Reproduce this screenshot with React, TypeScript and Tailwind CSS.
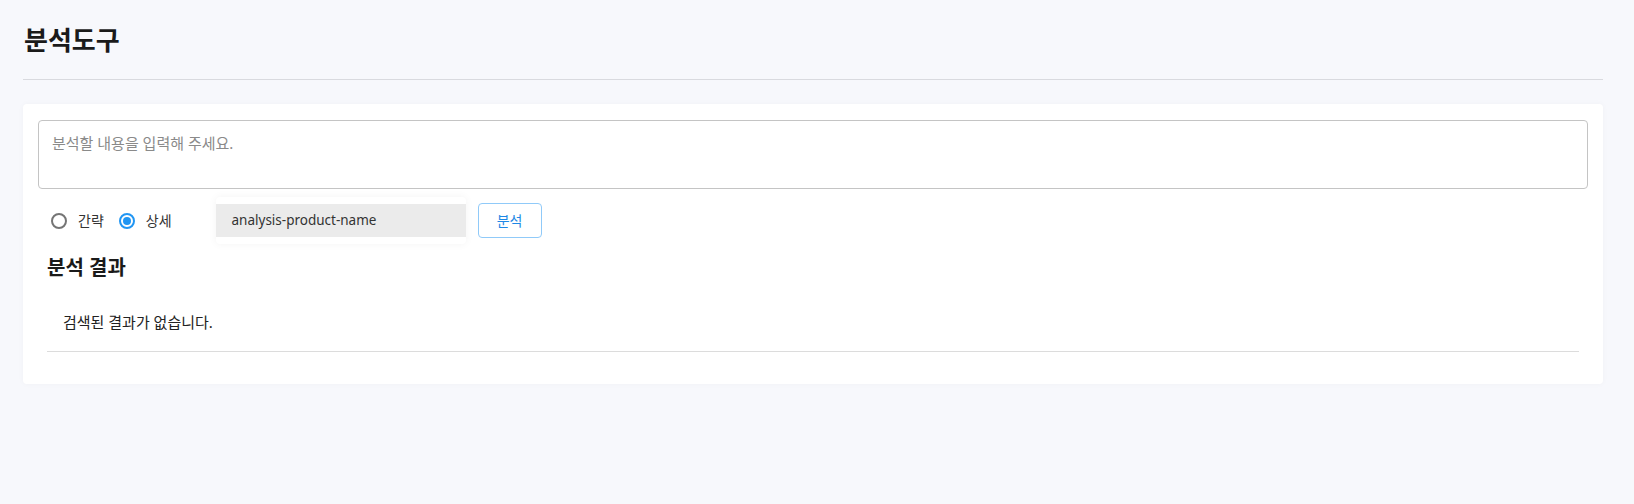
import React, { useState } from 'react';

const Radio = ({ checked, label, onClick }: { checked: boolean; label: string; onClick: () => void }) => (
    <label className="flex items-center cursor-pointer" onClick={onClick}>
        <span className="w-[26px] h-[26px] flex items-center justify-center">
            <span
                className={`w-[16px] h-[16px] rounded-full border-2 flex items-center justify-center ${
                    checked ? 'border-[#2196f3]' : 'border-[#757575]'
                }`}
            >
                {checked && <span className="w-[8px] h-[8px] rounded-full bg-[#2196f3]" />}
            </span>
        </span>
        <span className="ml-[6px] text-[14px] text-[#333]">{label}</span>
    </label>
);

const App = () => {
    const [mode, setMode] = useState<'brief' | 'detail'>('detail');
    const [text, setText] = useState('');

    return (
        <div
            className="min-h-[504px] bg-[#f7f8fc] pl-[23px] pr-[31px] pt-[21px]"
            style={{ fontFamily: '"Noto Sans", "Noto Sans CJK KR", sans-serif' }}
        >
            <h1 className="text-[26px] font-bold text-[#1a1a1a] leading-[38px] pl-[1px]">분석도구</h1>
            <div className="mt-[20px] border-t border-[#d9dadf]" />

            <div className="mt-[24px] bg-white rounded-[4px] shadow-[0_0_6px_rgba(0,0,0,0.03)] px-[15px] pt-[16px] pb-[32px]">
                <textarea
                    value={text}
                    onChange={(e) => setText(e.target.value)}
                    placeholder="분석할 내용을 입력해 주세요."
                    className="block w-full h-[69px] resize-none rounded-[4px] border border-[#c4c4c4] px-[13px] py-[12px] text-[15px] leading-[20px] text-[#333] placeholder-[#8a8a8a] outline-none"
                />

                <div className="flex items-center mt-[8px]">
                    <div className="flex items-center gap-[10px] pl-[8px]">
                        <Radio checked={mode === 'brief'} label="간략" onClick={() => setMode('brief')} />
                        <Radio checked={mode === 'detail'} label="상세" onClick={() => setMode('detail')} />
                    </div>
                    <div className="ml-[44px] w-[250px] py-[7px] bg-white rounded-[4px] shadow-[0_0_8px_rgba(0,0,0,0.05)]">
                        <div className="h-[33px] bg-[#ebebeb] flex items-center pl-[16px] text-[13.5px] text-[#333]">
                            analysis-product-name
                        </div>
                    </div>
                    <button className="ml-[12px] w-[64px] h-[35px] rounded-[4px] border border-[#90caf9] text-[#1e88e5] text-[14px] bg-white">
                        분석
                    </button>
                </div>

                <h2 className="mt-[9px] ml-[9px] text-[20px] font-bold text-[#1a1a1a] leading-[30px]">분석 결과</h2>
                <div className="mx-[9px] mt-[28px] pl-[16px] pb-[18px] border-b border-[#dcdcdc] text-[15px] text-[#222] leading-[22px]">
                    검색된 결과가 없습니다.
                </div>
            </div>
        </div>
    );
};

export default App;
